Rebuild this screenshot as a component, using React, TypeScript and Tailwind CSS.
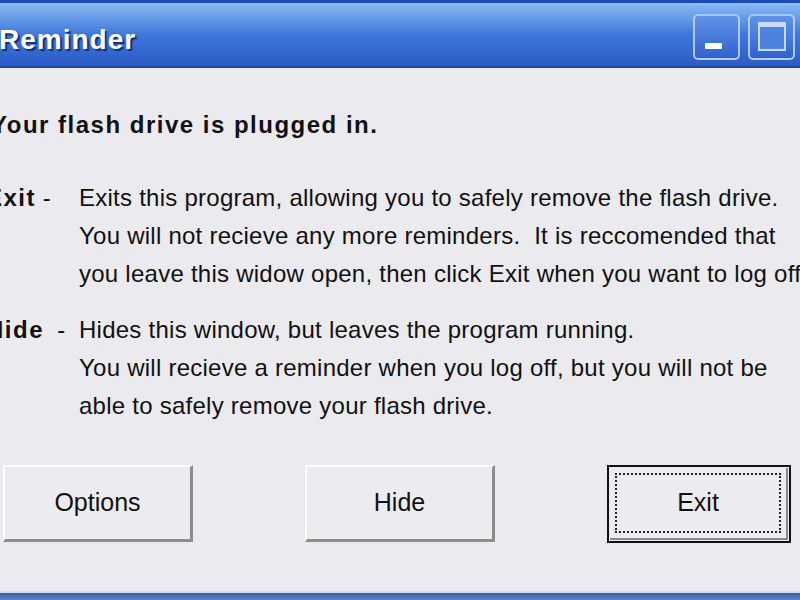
import React from 'react';

const font = { fontFamily: '"Liberation Sans", Arial, sans-serif' };

const TitleBar = () => (
  <div className="relative h-[68px] shrink-0 border-t-[3px] border-b-[2px] border-t-[#1c4cb0] border-b-[#1f4aa8] bg-gradient-to-b from-[#8cbaf2] via-[#3f77dc] to-[#2b5ac4] flex items-center">
    <span
      className="ml-[-1px] mt-[10px] text-[28px] font-bold text-white tracking-[1px] [text-shadow:2px_2px_1px_#0f2f7a]"
      style={font}
    >
      Reminder
    </span>
    <div className="ml-auto mr-[5px] mt-[4px] flex gap-[8px] items-center">
      <div className="w-[47px] h-[46px] rounded-[5px] border-2 border-[#c9dcf8]/80 bg-gradient-to-b from-[#5f93e8] to-[#2f62cf] flex items-end justify-center pb-[9px]">
        <div className="w-[17px] h-[6px] bg-white rounded-[1px] mr-[6px]" />
      </div>
      <div className="w-[47px] h-[46px] rounded-[5px] border-2 border-[#c9dcf8]/80 bg-gradient-to-b from-[#5f93e8] to-[#2f62cf] flex items-center justify-center">
        <div className="w-[28px] h-[29px] border-2 border-t-[5px] border-[#c7daf6] bg-[#4d82df]" />
      </div>
    </div>
  </div>
);

const Row = ({ label, lines }: { label: string; lines: string[] }) => (
  <div className="grid grid-cols-[93px_1fr]">
    <div className="leading-[38px] whitespace-pre">
      <span className="font-bold tracking-[1.5px]">{label}</span>
      <span>{label === 'Hide' ? '  -' : ' -'}</span>
    </div>
    <div className="whitespace-pre tracking-[0.25px]">
      {lines.map((l, i) => (
        <div key={i} className="leading-[38px]">
          {l}
        </div>
      ))}
    </div>
  </div>
);

const Btn = ({ label, focused }: { label: string; focused?: boolean }) =>
  focused ? (
    <div className="w-[184px] h-[78px] border-2 border-[#111] bg-[#ecebef] p-[1px]">
      <div className="h-full border-r-2 border-b-2 border-[#8a8a8a] p-[5px]">
        <div className="h-full border-2 border-dotted border-[#222] flex items-center justify-center text-[25px] text-[#111]">
          {label}
        </div>
      </div>
    </div>
  ) : (
    <div className="w-[190px] h-[77px] border-t-2 border-l-2 border-white border-r-[3px] border-b-[3px] border-r-[#8c8c8c] border-b-[#8c8c8c] bg-[#ecebef] flex items-center justify-center text-[25px] text-[#111]">
      {label}
    </div>
  );

export default function App() {
  return (
    <div className="w-[800px] h-[600px] overflow-hidden flex flex-col bg-[#ebeaee]" style={font}>
      <TitleBar />
      <div className="flex-1 flex flex-col text-[24px] text-[#111] overflow-hidden">
        <div className="ml-[-9px] mt-[42px] font-bold text-[24px] tracking-[1.5px] leading-[30px] whitespace-nowrap">
          Your flash drive is plugged in.
        </div>
        <div className="ml-[-14px] mt-[39px]">
          <Row
            label="Exit"
            lines={[
              'Exits this program, allowing you to safely remove the flash drive.',
              'You will not recieve any more reminders.  It is reccomended that',
              'you leave this widow open, then click Exit when you want to log off.',
            ]}
          />
        </div>
        <div className="ml-[-14px] mt-[18px]">
          <Row
            label="Hide"
            lines={[
              'Hides this window, but leaves the program running.',
              'You will recieve a reminder when you log off, but you will not be',
              'able to safely remove your flash drive.',
            ]}
          />
        </div>
        <div className="mt-[40px] flex items-start pl-[3px]">
          <Btn label="Options" />
          <div className="ml-[112px]">
            <Btn label="Hide" />
          </div>
          <div className="ml-[112px]">
            <Btn label="Exit" focused />
          </div>
        </div>
      </div>
      <div className="h-[9px] shrink-0 border-t-2 border-[#cfe0f6] bg-gradient-to-b from-[#3c5f98] to-[#5b86cc]" />
    </div>
  );
}
